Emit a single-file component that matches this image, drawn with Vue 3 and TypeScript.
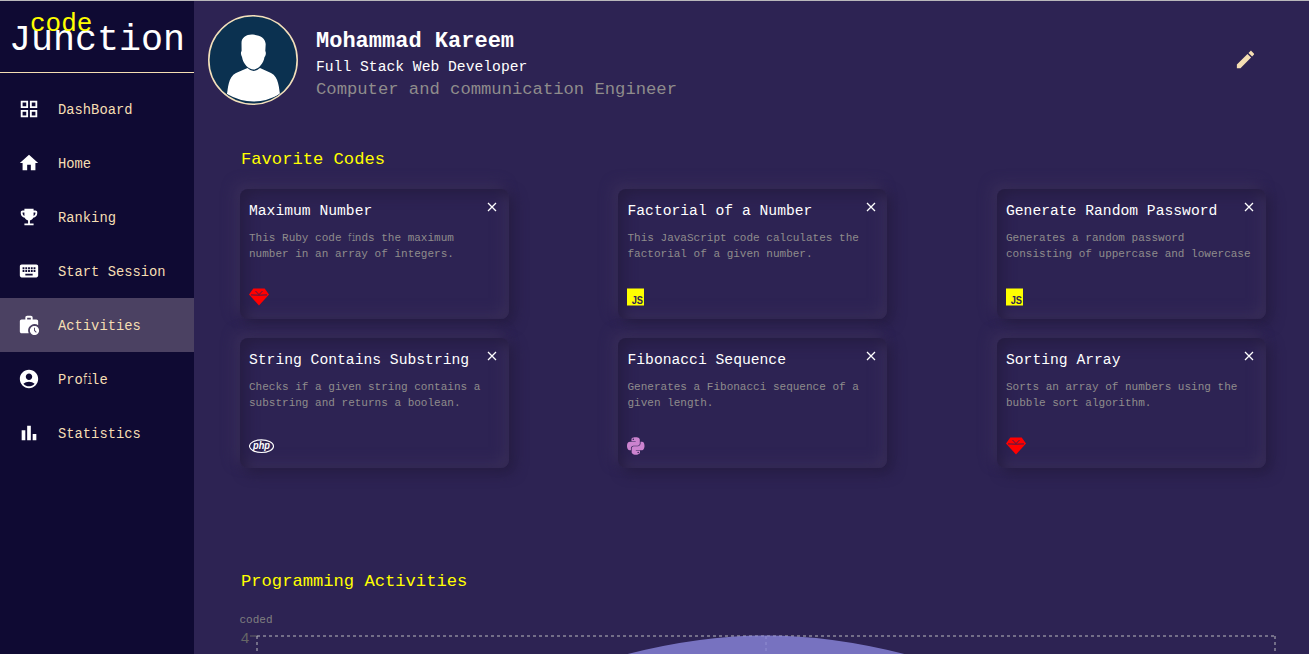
<script setup lang="ts">
interface NavItem {
  label: string
  paths: string[]
}

type Lang = 'ruby' | 'js' | 'php' | 'python'

interface CodeCard {
  title: string
  lines: string[]
  lang: Lang
}

const activeItem = 'Activities'

// Splits a text so that each "fi" pair can be set in a single character cell.
const splitLigatures = (text: string): string[] => text.split(/(fi)/).filter(Boolean)

const navItems: NavItem[] = [
  { label: 'DashBoard', paths: ['M3 3v8h8V3H3zm6 6H5V5h4v4zm-6 4v8h8v-8H3zm6 6H5v-4h4v4zm4-16v8h8V3h-8zm6 6h-4V5h4v4zm-6 4v8h8v-8h-8zm6 6h-4v-4h4v4z'] },
  { label: 'Home', paths: ['M10 20v-6h4v6h5v-8h3L12 3 2 12h3v8z'] },
  { label: 'Ranking', paths: ['M19 5h-2V3H7v2H5c-1.1 0-2 .9-2 2v1c0 2.55 1.92 4.63 4.39 4.94.63 1.5 1.98 2.63 3.61 2.96V19H7v2h10v-2h-4v-3.1c1.63-.33 2.98-1.46 3.61-2.96C19.08 12.63 21 10.55 21 8V7c0-1.1-.9-2-2-2zM5 8V7h2v3.82C5.84 10.4 5 9.3 5 8zm14 0c0 1.3-.84 2.4-2 2.82V7h2v1z'] },
  { label: 'Start Session', paths: ['M20 5H4c-1.1 0-1.99.9-1.99 2L2 17c0 1.1.9 2 2 2h16c1.1 0 2-.9 2-2V7c0-1.1-.9-2-2-2zm-9 3h2v2h-2V8zm0 3h2v2h-2v-2zM8 8h2v2H8V8zm0 3h2v2H8v-2zm-1 2H5v-2h2v2zm0-3H5V8h2v2zm9 7H8v-2h8v2zm0-4h-2v-2h2v2zm0-3h-2V8h2v2zm3 3h-2v-2h2v2zm0-3h-2V8h2v2z'] },
  {
    label: 'Activities',
    paths: [
      'M18 11c1.49 0 2.87.47 4 1.26V8c0-1.11-.89-2-2-2h-4V4c0-1.11-.89-2-2-2h-4c-1.11 0-2 .89-2 2v2H4c-1.11 0-1.99.89-1.99 2L2 19c0 1.11.89 2 2 2h7.68A6.995 6.995 0 0 1 18 11zm-8-7h4v2h-4V4z',
      'M18 13c-2.76 0-5 2.24-5 5s2.24 5 5 5 5-2.24 5-5-2.24-5-5-5zm1.65 7.35L17.5 18.2V15h1v2.79l1.85 1.85-.7.71z',
    ],
  },
  { label: 'Profile', paths: ['M12 2C6.48 2 2 6.48 2 12s4.48 10 10 10 10-4.48 10-10S17.52 2 12 2zm0 4c1.93 0 3.5 1.57 3.5 3.5S13.93 13 12 13s-3.5-1.57-3.5-3.5S10.07 6 12 6zm0 14c-2.03 0-4.43-.82-6.14-2.88C7.55 15.8 9.68 15 12 15s4.45.8 6.14 2.12C16.43 19.18 14.03 20 12 20z'] },
  { label: 'Statistics', paths: ['M4 9h4v11H4zm12 4h4v7h-4zm-6-9h4v16h-4z'] },
]

const cards: CodeCard[] = [
  { title: 'Maximum Number', lines: ['This Ruby code finds the maximum', 'number in an array of integers.'], lang: 'ruby' },
  { title: 'Factorial of a Number', lines: ['This JavaScript code calculates the', 'factorial of a given number.'], lang: 'js' },
  { title: 'Generate Random Password', lines: ['Generates a random password', 'consisting of uppercase and lowercase'], lang: 'js' },
  { title: 'String Contains Substring', lines: ['Checks if a given string contains a', 'substring and returns a boolean.'], lang: 'php' },
  { title: 'Fibonacci Sequence', lines: ['Generates a Fibonacci sequence of a', 'given length.'], lang: 'python' },
  { title: 'Sorting Array', lines: ['Sorts an array of numbers using the', 'bubble sort algorithm.'], lang: 'ruby' },
]
</script>

<template>
  <div class="app">
    <aside class="sidebar">
      <div class="brand">
        <span class="brand-main">Junction</span>
        <span class="brand-code">code</span>
      </div>
      <nav class="nav">
        <a v-for="item in navItems" :key="item.label" class="nav-item" :class="{ active: item.label === activeItem }">
          <svg class="nav-icon" viewBox="0 0 24 24"><path v-for="p in item.paths" :key="p" :d="p" /></svg>
          <span class="nav-label"><span v-for="(part, i) in splitLigatures(item.label)" :key="i" :class="{ liga: part === 'fi' }">{{ part }}</span></span>
        </a>
      </nav>
    </aside>

    <main class="main">
      <header class="profile">
        <svg class="avatar" viewBox="0 0 90 90">
          <defs><clipPath id="avatarClip"><circle cx="45" cy="45" r="43" /></clipPath></defs>
          <circle cx="45" cy="45" r="44.2" fill="#0b3150" stroke="#f3e0bb" stroke-width="1.6" />
          <g clip-path="url(#avatarClip)">
            <path fill="#fff" d="M19 79C20 74 20 62 28 58L39.500 53Q45.500 59 52 53L63 58C71 62 71 74 72 79Q59 86.500 45.500 86.500T19 79z" />
            <path fill="#fff" d="M33.500 28C33.500 22 39 19 45 19.500C52.500 20.500 57 22.500 57.700 29L57.300 36C58.500 38 57.500 41 56.500 42C55.500 49 50 54.500 45.500 54.500S35 49 34 42C32.800 40 32.500 37.500 33.600 36z" />
          </g>
        </svg>
        <div class="who">
          <h1>Mohammad Kareem</h1>
          <p class="role">Full Stack Web Developer</p>
          <p class="field">Computer and communication Engineer</p>
        </div>
        <svg class="edit" viewBox="0 0 24 24">
          <path d="M3 17.250V21h3.750L17.810 9.940l-3.750-3.750L3 17.250zM20.710 7.040c.39-.39.39-1.020 0-1.410l-2.340-2.340c-.39-.39-1.020-.39-1.410 0l-1.830 1.830 3.750 3.750 1.830-1.830z" />
        </svg>
      </header>

      <h2 class="section-title">Favorite Codes</h2>
      <section class="cards">
        <article v-for="card in cards" :key="card.title" class="card">
          <div class="card-head">
            <h3>{{ card.title }}</h3>
            <svg class="close" viewBox="0 0 10 10"><path d="M1 1l8 8M9 1l-8 8" /></svg>
          </div>
          <p class="desc">
            <span v-for="line in card.lines" :key="line"><span v-for="(part, i) in splitLigatures(line)" :key="i" :class="{ liga: part === 'fi' }">{{ part }}</span></span>
          </p>
          <div class="lang">
            <svg v-if="card.lang === 'ruby'" width="20" height="18" viewBox="0 0 20 18">
              <path fill="#f00" d="M4.300 .5h11.400L20 6.500 10 17.500 0 6.500z" />
              <path fill="none" stroke="#2d2353" stroke-width=".9" d="M2 6.900q8 .6 16 0M6.500 3l3.500 3.600L13.500 3" />
            </svg>
            <svg v-else-if="card.lang === 'js'" width="17" height="18" viewBox="0 0 17 18">
              <rect y=".5" width="17" height="17" fill="#ff0" />
              <text x="4.700" y="15.700" class="js-text" textLength="11.300" lengthAdjust="spacingAndGlyphs">JS</text>
            </svg>
            <svg v-else-if="card.lang === 'php'" width="26" height="18" viewBox="0 0 26 18">
              <ellipse cx="12.500" cy="9.200" rx="12" ry="6.300" fill="none" stroke="#fff" stroke-width="1.100" />
              <text x="4" y="11.600" class="php-text" textLength="17" lengthAdjust="spacingAndGlyphs">php</text>
            </svg>
            <svg v-else width="17.500" height="20" viewBox="0 0 448 512">
              <path fill="#cc83cf" d="M439.800 200.500c-7.700-30.900-22.300-54.200-53.400-54.200h-40.100v47.400c0 36.800-31.200 67.800-66.800 67.800H172.700c-29.200 0-53.400 25-53.400 54.300v101.800c0 29 25.200 46 53.400 54.300 33.800 9.900 66.300 11.700 106.800 0 26.900-7.800 53.400-23.500 53.400-54.300v-40.700H226.200v-13.600h160.200c31.100 0 42.600-21.700 53.400-54.200 11.200-33.500 10.700-65.700 0-108.600zM286.200 404c11.100 0 20.100 9.100 20.100 20.300 0 11.300-9 20.400-20.100 20.400-11 0-20.100-9.200-20.100-20.400.1-11.300 9.100-20.300 20.100-20.300zM167.800 248.100h106.800c29.700 0 53.400-24.500 53.400-54.300V91.900c0-29-24.400-50.700-53.400-55.600-35.800-5.900-74.700-5.600-106.800.1-45.200 8-53.400 24.700-53.400 55.600v40.700h106.900v13.600h-147c-31.100 0-58.300 18.700-66.800 54.200-9.800 40.700-10.200 66.100 0 108.600 7.600 31.600 25.700 54.200 56.800 54.200H101v-48.800c0-35.300 30.500-66.400 66.800-66.400zm-6.700-142.600c-11.100 0-20.100-9.100-20.100-20.300.1-11.300 9-20.400 20.100-20.400 11 0 20.100 9.200 20.100 20.400s-9 20.300-20.100 20.300z" />
            </svg>
          </div>
        </article>
      </section>

      <h2 class="section-title activities-title">Programming Activities</h2>
      <svg class="chart" width="1069" height="46" viewBox="240 608 1069 46">
        <text x="239.500" y="623" class="axis-label">coded</text>
        <text x="240.500" y="643" class="axis-tick">4</text>
        <path d="M250 636h7" stroke="#666" fill="none" />
        <g stroke="#ccc" stroke-opacity=".6" stroke-dasharray="3 3" fill="none" stroke-width="1.500">
          <path d="M257 636H1275" />
          <path d="M257 636V660M766 636V660M1275 636V660" />
        </g>
        <path d="M620 656Q697 635.500 766 635.500T912 656z" fill="#8884d8" fill-opacity=".82" />
      </svg>
    </main>
  </div>
</template>

<style>
body {
  background: #2d2353;
  overflow: hidden;
}
</style>

<style scoped>
.app {
  box-sizing: border-box;
  display: flex;
  width: 1309px;
  height: 654px;
  border-top: 1px solid #b9b8bb;
  overflow: hidden;
  background: #2d2353;
  font-family: "Liberation Mono", monospace;
  white-space: nowrap;
}
h1, h2, h3, p {
  margin: 0;
  font-weight: 400;
}
.liga {
  display: inline-block;
  width: .6em;
  transform: scaleX(.55);
  transform-origin: 0 0;
}
.sidebar {
  flex: none;
  width: 194px;
  background: #0f0a33;
}
.brand {
  position: relative;
  height: 71px;
  border-bottom: 1px solid #f5deb3;
}
.brand-main {
  position: absolute;
  left: 9px;
  top: 18px;
  font-size: 36.700px;
  line-height: 42px;
  color: #fff;
}
.brand-code {
  position: absolute;
  left: 30px;
  top: 8px;
  font-size: 26px;
  line-height: 30px;
  color: #ff0;
}
.nav {
  display: flex;
  flex-direction: column;
  padding-top: 9px;
}
.nav-item {
  display: flex;
  align-items: center;
  height: 54px;
  gap: 18px;
  padding-left: 18px;
  font-size: 13.800px;
  color: #f5deb3;
}
.nav-label {
  padding-top: 2px;
}
.nav-item.active {
  background: #4b4162;
}
.nav-icon {
  width: 22px;
  height: 22px;
  fill: #fff;
}
.main {
  flex: 1;
  min-width: 0;
}
.profile {
  display: flex;
  align-items: flex-start;
  height: 148px;
  box-sizing: border-box;
  padding: 14px 52px 0 14px;
}
.avatar {
  width: 90px;
  height: 90px;
}
.who {
  flex: 1;
  padding: 13px 0 0 18px;
}
.who h1 {
  font-size: 22px;
  font-weight: 700;
  line-height: 27px;
  color: #fff;
}
.role {
  font-size: 14.680px;
  line-height: 24px;
  color: #fff;
}
.field {
  font-size: 17.200px;
  line-height: 22px;
  color: #8f8c8c;
}
.edit {
  width: 23px;
  height: 23px;
  margin-top: 33px;
  fill: #f5deb3;
}
.section-title {
  padding-left: 47px;
  font-size: 17.150px;
  line-height: 22px;
  color: #ff0;
}
.cards {
  display: grid;
  grid-template-columns: repeat(3, 269px);
  justify-content: space-between;
  row-gap: 19px;
  padding: 18.400px 43.400px 0 45.600px;
}
.card {
  box-sizing: border-box;
  height: 130px;
  padding: 10.600px 9px 0 9.400px;
  border-radius: 8px;
  box-shadow:
    inset 5px 5px 13px #251c42,
    inset -5px -5px 13px #3a2f5b,
    5px 5px 13px #251c42,
    -5px -5px 13px #3a2f5b;
}
.card-head {
  display: flex;
  justify-content: space-between;
}
.card h3 {
  font-size: 14.680px;
  line-height: 22px;
  color: #fff;
}
.close {
  width: 10px;
  height: 10px;
  margin: 2px 2.500px 0 0;
  fill: none;
  stroke: #fff;
  stroke-width: 1.300;
}
.desc {
  display: flex;
  flex-direction: column;
  height: 48px;
  padding-top: 8px;
  font-size: 11.020px;
  line-height: 16px;
  color: #8f8c8c;
}
.lang {
  display: flex;
  align-items: center;
  height: 20px;
  margin-top: 9.500px;
}
.js-text {
  font-family: "Liberation Sans", sans-serif;
  font-size: 10px;
  font-weight: 700;
  fill: #2d2353;
}
.php-text {
  font-family: "Liberation Sans", sans-serif;
  font-size: 10.500px;
  font-style: italic;
  font-weight: 700;
  fill: #fff;
}
.activities-title {
  margin-top: 102.600px;
}
.chart {
  display: block;
  margin: 15px 0 0 46px;
  overflow: visible;
}
.axis-label {
  font-size: 11.020px;
  fill: #808080;
}
.axis-tick {
  font-size: 15px;
  fill: #666;
}
</style>
